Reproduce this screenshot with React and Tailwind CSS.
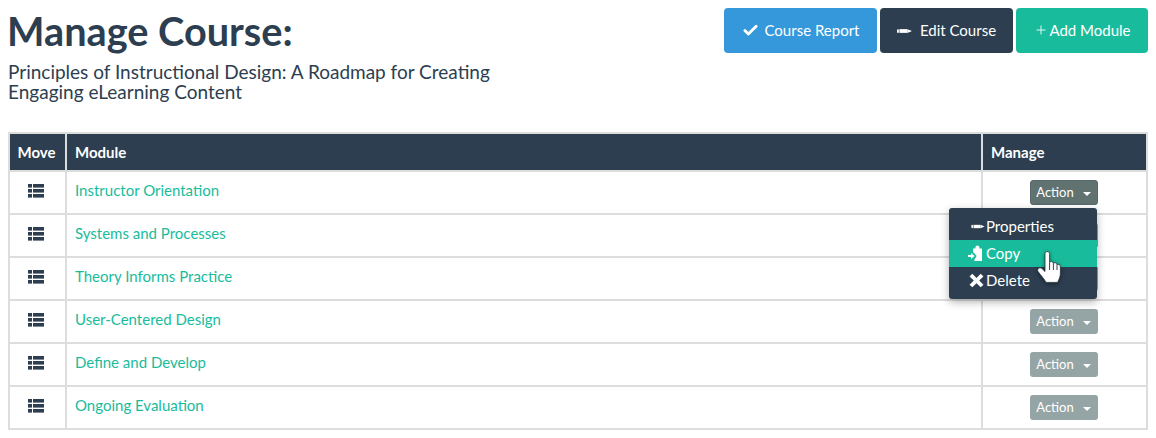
import React from 'react';
import { Check, Plus } from 'lucide-react';

const modules = [
  'Instructor Orientation',
  'Systems and Processes',
  'Theory Informs Practice',
  'User-Centered Design',
  'Define and Develop',
  'Ongoing Evaluation',
];

const Pencil = ({ className }) => (
  <svg viewBox="0 0 16 6" className={className} fill="currentColor">
    <rect x="0" y="1" width="2" height="4" rx="1" />
    <rect x="2.6" y="1" width="8.4" height="4" />
    <path d="M11 1 L16 3 L11 5 Z" />
  </svg>
);

const ListIcon = () => (
  <svg viewBox="0 0 16 14" className="w-4 h-[14px] text-[#2c3e50]" fill="currentColor">
    <rect x="0" y="0" width="4" height="3.6" />
    <rect x="5" y="0" width="11" height="3.6" />
    <rect x="0" y="5" width="4" height="3.6" />
    <rect x="5" y="5" width="11" height="3.6" />
    <rect x="0" y="10" width="4" height="3.6" />
    <rect x="5" y="10" width="11" height="3.6" />
  </svg>
);

const ClipboardIcon = () => (
  <svg viewBox="0 0 15 17" className="w-[15px] h-[17px]" fill="currentColor">
    <path d="M5 3.6 H7.4 V2.4 A2 2 0 0 1 11.4 2.4 V3.6 H14 V16 H6.4 V14.6 L8.6 11 L5.6 7.4 H5 Z" />
    <path d="M0 10 H3 V8 L6.6 11 L3 14 V12 H0 Z" />
  </svg>
);

const XIcon = () => (
  <svg viewBox="0 0 16 16" className="w-[15px] h-[15px]" fill="currentColor">
    <path d="M3.5 0.8 L8 5.2 L12.5 0.8 L15.4 3.6 L10.9 8 L15.4 12.4 L12.5 15.2 L8 10.8 L3.5 15.2 L0.6 12.4 L5.1 8 L0.6 3.6 Z" />
  </svg>
);

const Hand = () => (
  <svg viewBox="0 0 24 32" className="w-6 h-8" style={{ filter: 'drop-shadow(0 1px 2px rgba(0,0,0,.45))' }}>
    <path
      d="M8 2.5 C8 0 12.6 0 12.6 2.5 L12.6 11.5 C13.6 10 16 10.4 16.4 12.4 C17.4 11.2 19.6 11.6 20 13.6 C21 12.8 23.4 13.4 23.4 15.8 L23.4 22 C23.4 26 22 28.5 20.5 31.4 L9 31.4 C7.5 28.5 4 24.5 1 20.5 C-0.4 18.4 2.4 15.4 5 17.6 L8 20.5 Z"
      fill="#fff"
      stroke="#22303c"
      strokeWidth="0.8"
      strokeLinejoin="round"
    />
    <path d="M12.6 11.5 V19 M16.4 12.4 V19 M20 13.6 V19" stroke="#22303c" strokeWidth="0.9" fill="none" />
  </svg>
);

const ActionButton = ({ active }) => (
  <button
    className={`inline-flex items-center justify-center w-[68px] h-[25px] rounded-[3px] text-white text-[13px] ${
      active ? 'bg-[#617371] border border-[#55676a]' : 'bg-[#95a5a6]'
    }`}
  >
    Action
    <span className="ml-[9px] mt-[2px] w-0 h-0 border-x-[4px] border-x-transparent border-t-[4px] border-t-white" />
  </button>
);

export default function App() {
  return (
    <div className="w-[1156px] h-[438px] overflow-hidden bg-white text-[#2c3e50] font-['Lato','Open_Sans',sans-serif]">
      <div className="flex justify-between items-start pl-2 pr-2 pt-2 h-[132px]">
        <div>
          <h1 className="-ml-px text-[39.7px] leading-[45px] font-bold">Manage Course:</h1>
          <p className="w-[500px] mt-[9px] text-[19px] leading-[20px]">
            Principles of Instructional Design: A Roadmap for Creating Engaging eLearning Content
          </p>
        </div>
        <div className="flex gap-[3px] text-white text-[15px]">
          <button className="flex items-center justify-center gap-[6px] w-[153px] h-[45px] rounded bg-[#3498db]">
            <Check size={17} strokeWidth={4} />
            Course Report
          </button>
          <button className="flex items-center justify-center gap-2 w-[133px] h-[45px] rounded bg-[#2c3e50]">
            <Pencil className="w-[15px] h-[6px]" />
            Edit Course
          </button>
          <button className="flex items-center justify-center gap-[2px] w-[132px] h-[45px] rounded bg-[#18bc9c]">
            <Plus size={14} strokeWidth={1.5} className="translate-x-px -translate-y-px" />
            Add Module
          </button>
        </div>
      </div>

      <div className="relative ml-[8px] w-[1140px]">
        <table className="w-full table-fixed border-collapse border-2 border-[#dddddd] text-[15px]">
          <colgroup>
            <col className="w-[57px]" />
            <col />
            <col className="w-[165px]" />
          </colgroup>
          <thead>
            <tr className="h-[38px] bg-[#2c3e50] text-white font-bold text-left">
              <th className="text-center pr-[2px] border-x-2 border-[#dddddd]">Move</th>
              <th className="pl-2 border-x-2 border-[#dddddd]">Module</th>
              <th className="pl-2 border-x-2 border-[#dddddd]">Manage</th>
            </tr>
          </thead>
          <tbody>
            {modules.map((name, i) => (
              <tr key={name} className="h-[43px] border-t-2 border-[#dddddd]">
                <td className="border-x-2 border-[#dddddd]">
                  <div className="flex justify-center -mt-[4px] pr-[4px]">
                    <ListIcon />
                  </div>
                </td>
                <td className="pl-2 border-x-2 border-[#dddddd] text-[#18bc9c]">
                  <span className="relative -top-[2px]">{name}</span>
                </td>
                <td className="border-x-2 border-[#dddddd] text-center pr-[2px]">
                  <ActionButton active={i === 0} />
                </td>
              </tr>
            ))}
          </tbody>
        </table>

        <div className="absolute left-[941px] top-[76px] w-[148px] h-[91px] py-[5px] rounded-[3px] bg-[#2c3e50] text-white text-[15px] shadow-[0_3px_8px_rgba(0,0,0,0.3)]">
          <div className="flex items-center h-[27px] pl-[21px]">
            <Pencil className="w-[16px] h-[5px]" />
            Properties
          </div>
          <div className="flex items-center h-[27px] pl-[19px] bg-[#18bc9c]">
            <ClipboardIcon />
            <span className="ml-[3px]">Copy</span>
          </div>
          <div className="flex items-center h-[27px] pl-[20px]">
            <XIcon />
            <span className="ml-[2px]">Delete</span>
          </div>
        </div>
        <div className="absolute left-[1029px] top-[119px]">
          <Hand />
        </div>
      </div>
    </div>
  );
}
